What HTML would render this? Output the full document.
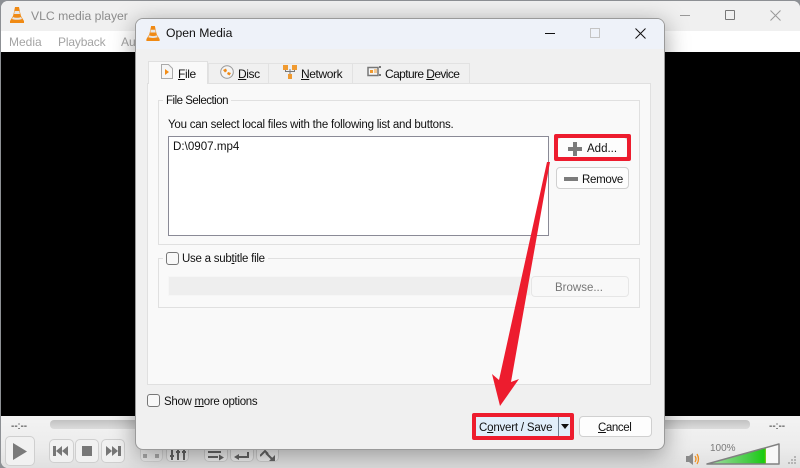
<!DOCTYPE html>
<html><head><meta charset="utf-8">
<style>
html,body{margin:0;padding:0;width:800px;height:468px;overflow:hidden;background:#8d9094}
*{box-sizing:border-box}
body{font-family:"Liberation Sans",sans-serif;font-size:12px;color:#111;position:relative}
.a{position:absolute}
.t{position:absolute;white-space:nowrap;line-height:14px}
.btn{position:absolute;background:#fdfdfd;border:1px solid #d0d0d0;border-radius:4px}
.ctl{position:absolute;background:#f1f1f1;border:1px solid #cfcfcf;border-radius:5px}
u{text-underline-offset:1px}
</style></head>
<body>
<!-- main window -->
<div class="a" style="left:1px;top:1px;width:799px;height:467px;background:#efefef;border-radius:7px 7px 0 7px;overflow:hidden">
  <div class="a" style="left:0;top:0;width:799px;height:30px;background:#f0f0f0"></div>
  <div class="a" style="left:0;top:30px;width:799px;height:21px;background:#fff"></div>
  <div class="a" style="left:0;top:51px;width:799px;height:365px;background:#000"></div>
  <div class="a" style="left:0;top:415px;width:799px;height:52px;background:linear-gradient(#f3f3f3,#ececec 60%,#e0e0e0)"></div>
</div>
<svg class="a" style="left:9px;top:6px" width="16" height="18" viewBox="0 0 16 18"><path d="M6 1h4l1 5 1 4 3 5v2H1v-2l3-5 1-4z" fill="#f08a14"/><path d="M5.700 5h4.600l.6 3H5.100z" fill="#e6e6e6"/><path d="M4 11c2 1 6 1 8 0l1 2c-3 1-7 1-10 0z" fill="#e6e6e6"/></svg>
<div class="t" style="left:31px;top:9px;font-size:12.200px;color:#8c8c8c">VLC media player</div>
<div class="t" style="left:9px;top:35px;font-size:12px;color:#a4a4a4">Media</div>
<div class="t" style="left:58px;top:35px;font-size:12px;letter-spacing:-.15px;color:#a4a4a4">Playback</div>
<div class="t" style="left:121px;top:35px;font-size:12px;color:#a4a4a4">Audio</div>
<div class="a" style="left:680px;top:15px;width:10px;height:1px;background:#999"></div>
<div class="a" style="left:725px;top:10px;width:10px;height:10px;border:1px solid #777;border-radius:1px"></div>
<svg class="a" style="left:770px;top:10px" width="11" height="11"><path d="M.5.5l10 10M10.500.5l-10 10" stroke="#999" fill="none"/></svg>

<!-- bottom controls -->
<div class="t" style="left:11px;top:420px;font-size:10px;color:#111">--:--</div>
<div class="t" style="left:769px;top:420px;font-size:10px;color:#111">--:--</div>
<div class="a" style="left:50px;top:420px;width:700px;height:9px;background:linear-gradient(#c2c2c2,#dcdcdc);border-radius:4px"></div>
<div class="ctl" style="left:5px;top:436px;width:30px;height:30px"></div>
<svg class="a" style="left:13px;top:443px" width="15" height="17"><path d="M0 0l14 8.500-14 8.500z" fill="#7a7a7a"/></svg>
<div class="ctl" style="left:49px;top:439px;width:25px;height:24px"></div>
<div class="ctl" style="left:75px;top:439px;width:24px;height:24px"></div>
<div class="ctl" style="left:101px;top:439px;width:24px;height:24px"></div>
<svg class="a" style="left:53px;top:446px" width="16" height="10"><path d="M0 0h3v10H0zM3 5l6-5v10zM9 5l6-5v10z" fill="#777"/></svg>
<div class="a" style="left:82px;top:446px;width:10px;height:10px;background:#777"></div>
<svg class="a" style="left:105px;top:446px" width="16" height="10"><path d="M13 0h3v10h-3zM13 5L7 0v10zM7 5L1 0v10z" fill="#777"/></svg>
<div class="ctl" style="left:140px;top:441px;width:23px;height:21px;opacity:.7"></div>
<div class="ctl" style="left:166px;top:441px;width:23px;height:21px"></div>
<div class="ctl" style="left:204px;top:441px;width:24px;height:21px"></div>
<div class="ctl" style="left:230px;top:441px;width:24px;height:21px"></div>
<div class="ctl" style="left:256px;top:441px;width:23px;height:21px"></div>
<svg class="a" style="left:143px;top:454px" width="17" height="5"><path d="M0 0h4v4H0zM12 0h4v4h-4z" fill="#aaa"/></svg>
<svg class="a" style="left:170px;top:449px" width="17" height="11"><path d="M2 0v11M8 0v11M14 0v11" stroke="#666" stroke-width="2"/><path d="M0 6h4v2H0zM6 2h4v2H6zM12 2h4v2h-4z" fill="#666"/></svg>
<svg class="a" style="left:208px;top:451px" width="16" height="10"><path d="M0 0h13v2H0zM0 5h10v2H0z" fill="#666"/><path d="M11 3.500l5 3-5 3z" fill="#666"/></svg>
<svg class="a" style="left:234px;top:452px" width="16" height="9"><path d="M14 0v5H3" stroke="#666" stroke-width="2" fill="none"/><path d="M5 2L0 5l5 3z" fill="#666"/></svg>
<svg class="a" style="left:260px;top:449px" width="16" height="12"><path d="M0 7l5-5 3 3" stroke="#666" stroke-width="2" fill="none"/><path d="M6 4l6 6" stroke="#666" stroke-width="2"/><path d="M15 6v6H9z" fill="#666"/></svg>
<svg class="a" style="left:686px;top:452px" width="15" height="14"><path d="M0 4h3l4-3v12L3 10H0z" fill="#8a8a8a"/><path d="M9 4q2 3 0 6M11 2q3 5 0 10" stroke="#f09020" stroke-width="1.300" fill="none"/></svg>
<div class="t" style="left:710px;top:442px;font-size:10px;color:#7a7a7a">100%</div>
<svg class="a" style="left:706px;top:442px" width="76" height="24"><defs><linearGradient id="g" x1="0" x2="1"><stop offset="0" stop-color="#a8dca8"/><stop offset=".75" stop-color="#3ecb3e"/><stop offset=".97" stop-color="#18cc10"/><stop offset="1" stop-color="#8ec820"/></linearGradient></defs><path d="M1 22L73 2v20z" fill="#f8f8f8"/><path d="M1 22L60 6v16z" fill="url(#g)"/><path d="M1 22L73 2v20z" fill="none" stroke="#808080" stroke-width="1.500" stroke-linejoin="round"/></svg>
<svg class="a" style="left:788px;top:456px" width="10" height="10"><path d="M6 0h2v2H6zM3 3h2v2H3zM6 3h2v2H6zM0 6h2v2H0zM3 6h2v2H3zM6 6h2v2H6z" fill="#b5b5b5"/></svg>

<!-- dialog -->
<div class="a" style="left:135px;top:18px;width:530px;height:432px;background:#f0f0f0;border:1px solid #9a9a9a;border-radius:8px;box-shadow:0 5px 24px rgba(0,0,0,.38)"><div class="a" style="left:0;top:0;width:528px;height:30px;background:#eef2f9;border-radius:7px 7px 0 0"></div></div>
<svg class="a" style="left:145px;top:25px" width="16" height="17" viewBox="0 0 16 18"><path d="M6 1h4l1 5 1 4 3 5v2H1v-2l3-5 1-4z" fill="#f08a14"/><path d="M5.700 5h4.600l.6 3H5.100z" fill="#e6e6e6"/><path d="M4 11c2 1 6 1 8 0l1 2c-3 1-7 1-10 0z" fill="#e6e6e6"/></svg>
<div class="t" style="left:166px;top:26px;font-size:12.200px;color:#111">Open Media</div>
<div class="a" style="left:545px;top:33px;width:10px;height:1px;background:#111"></div>
<div class="a" style="left:590px;top:28px;width:10px;height:10px;border:1px solid #c4c4c4"></div>
<svg class="a" style="left:635px;top:28px" width="11" height="11"><path d="M.5.5l10 10M10.500.5l-10 10" stroke="#111" fill="none"/></svg>

<!-- tabs and panel -->
<div class="a" style="left:147px;top:83px;width:504px;height:302px;background:#f9f9f9;border:1px solid #e0e0e0"></div>
<div class="a" style="left:208px;top:63px;width:61px;height:21px;background:#f0f0f0;border:1px solid #e2e2e2;border-bottom-color:#e0e0e0"></div>
<div class="a" style="left:269px;top:63px;width:84px;height:21px;background:#f0f0f0;border:1px solid #e2e2e2;border-left:0"></div>
<div class="a" style="left:353px;top:63px;width:117px;height:21px;background:#f0f0f0;border:1px solid #e2e2e2;border-left:0"></div>
<div class="a" style="left:148px;top:61px;width:60px;height:23px;background:#f9f9f9;border:1px solid #e0e0e0;border-bottom:0"></div>
<svg class="a" style="left:161px;top:64px" width="12" height="15"><path d="M.5.5h7l4 4v10H.5z" fill="#f6f6f6" stroke="#aaa"/><path d="M4 5l4 3-4 3z" fill="#f28c16"/></svg>
<div class="t" style="left:178px;top:67px;font-size:12px;letter-spacing:-.4px"><u>F</u>ile</div>
<svg class="a" style="left:220px;top:65px" width="14" height="14"><circle cx="7" cy="7" r="6.300" fill="#f4f4f4" stroke="#999"/><path d="M3 5l3-1.500 1 2.500-2 1.500zM8 7l3 1-1.500 2.500-2.500-1.500z" fill="#ee8a18"/></svg>
<div class="t" style="left:238px;top:67px;font-size:12px;letter-spacing:-.4px"><u>D</u>isc</div>
<svg class="a" style="left:283px;top:65px" width="15" height="14"><path d="M7 4v6M2.500 5v1.500h9V5" stroke="#777" fill="none"/><path d="M0 0h5v5H0zM9 0h5v5H9zM5 9h4v5H5z" fill="#f09a30"/></svg>
<div class="t" style="left:301px;top:67px;font-size:12px;letter-spacing:-.4px"><u>N</u>etwork</div>
<svg class="a" style="left:367px;top:65px" width="14" height="13"><path d="M1 2.500h10v8H1z" fill="#f6f6f6" stroke="#777" stroke-width="1.500"/><path d="M3 5h3v3H3z" fill="#f09a30"/><path d="M7 5h3M7 7h3" stroke="#f09a30"/><path d="M12 1h2v2h-2zM12 9h2v2h-2z" fill="#777"/></svg>
<div class="t" style="left:385px;top:67px;font-size:12px;letter-spacing:-.6px">Capture <u>D</u>evice</div>

<!-- File Selection -->
<div class="a" style="left:158px;top:100px;width:482px;height:145px;border:1px solid #e0e0e0"></div>
<div class="t" style="left:163px;top:94px;background:#f9f9f9;padding:0 3px;font-size:11.500px;letter-spacing:-.5px">File Selection</div>
<div class="t" style="left:168px;top:118px;font-size:11.500px;letter-spacing:-.22px">You can select local files with the following list and buttons.</div>
<div class="a" style="left:168px;top:136px;width:381px;height:100px;background:#fff;border:1px solid #8a8a96"></div>
<div class="t" style="left:173px;top:140px;font-size:11.600px">D:\0907.mp4</div>
<div class="btn" style="left:557px;top:137px;width:71px;height:22px"></div>
<svg class="a" style="left:568px;top:142px" width="14" height="14"><path d="M5 0h4v5h5v4H9v5H5V9H0V5h5z" fill="#7b7b7b"/></svg>
<div class="t" style="left:587px;top:142px;font-size:11.500px">Add...</div>
<div class="btn" style="left:556px;top:167px;width:73px;height:22px"></div>
<div class="a" style="left:564px;top:177px;width:14px;height:4px;background:#7b7b7b"></div>
<div class="t" style="left:582px;top:173px;font-size:11.500px;letter-spacing:-.3px">Remove</div>

<!-- subtitle -->
<div class="a" style="left:158px;top:258px;width:482px;height:50px;border:1px solid #e0e0e0"></div>
<div class="a" style="left:163px;top:250px;width:105px;height:18px;background:#f9f9f9"></div>
<div class="a" style="left:166px;top:252px;width:13px;height:13px;background:#f8f8f8;border:1px solid #777;border-radius:3px"></div>
<div class="t" style="left:182px;top:252px;font-size:11.500px;letter-spacing:-.25px">Use a sub<u>t</u>itle file</div>
<div class="a" style="left:168px;top:276px;width:363px;height:20px;background:#eeeeee;border:1px solid #f6f6f6"></div>
<div class="btn" style="left:531px;top:276px;width:98px;height:21px;background:#f8f8f8;border-color:#e6e6e6"></div>
<div class="t" style="left:555px;top:281px;font-size:11.500px;color:#777">Browse...</div>

<!-- bottom of dialog -->
<div class="a" style="left:147px;top:394px;width:13px;height:13px;background:#f8f8f8;border:1px solid #777;border-radius:3px"></div>
<div class="t" style="left:164px;top:395px;font-size:11.500px;letter-spacing:-.3px">Show <u>m</u>ore options</div>
<div class="a" style="left:472px;top:413px;width:102px;height:27px;border:4px solid #ed1c2e;border-radius:2px;background:#e1eefa"></div>
<div class="a" style="left:558px;top:417px;width:1px;height:19px;background:#6e7f90"></div>
<svg class="a" style="left:561px;top:424px" width="8" height="5"><path d="M0 0h8L4 5z" fill="#111"/></svg>
<div class="t" style="left:479px;top:421px;font-size:11.500px;letter-spacing:-.2px">C<u>o</u>nvert / Save</div>
<div class="btn" style="left:579px;top:416px;width:73px;height:21px"></div>
<div class="t" style="left:598px;top:421px;font-size:11.500px;letter-spacing:-.4px"><u>C</u>ancel</div>

<!-- red annotations -->
<div class="a" style="left:554px;top:134px;width:77px;height:27px;border:4px solid #ed1c2e;border-radius:2px"></div>
<svg class="a" style="left:0;top:0" width="800" height="468"><path d="M547 162L550 162 511 382 519 379 500 406 492 374 499 380z" fill="#ed1c2e"/></svg>
</body></html>
